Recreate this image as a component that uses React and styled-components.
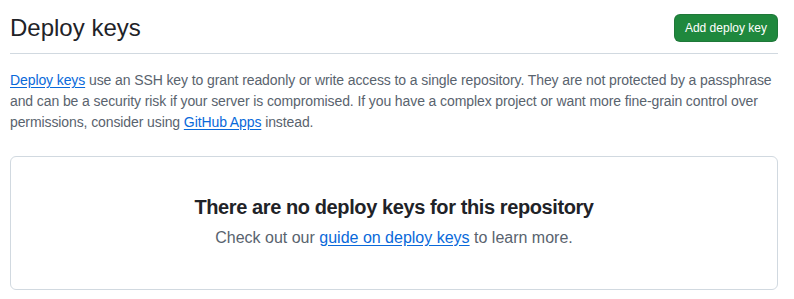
import React from 'react';
import styled, { createGlobalStyle } from 'styled-components';

const GlobalStyle = createGlobalStyle`
  body {
    margin: 0;
    background: #ffffff;
    font-family: "Liberation Sans", "Noto Sans", sans-serif;
    color: #1f2328;
  }
`;

const Page = styled.div`
  width: 768px;
  margin-left: 10px;
  padding-top: 12px;
`;

const Header = styled.div`
  display: flex;
  align-items: center;
  justify-content: space-between;
  padding-bottom: 9px;
  border-bottom: 1px solid #d1d9e0;
`;

const Title = styled.h2`
  margin: 0;
  font-size: 24px;
  font-weight: 400;
  line-height: 32px;
  color: #1f2328;
`;

const PrimaryButton = styled.button`
  height: 28px;
  padding: 0 10px;
  border: 1px solid rgba(31, 35, 40, 0.15);
  border-radius: 6px;
  background: #1f883d;
  color: #ffffff;
  font-family: inherit;
  font-size: 12px;
  font-weight: 500;
  cursor: pointer;
`;

const Description = styled.p`
  margin: 16px 0 0;
  font-size: 14px;
  line-height: 21px;
  letter-spacing: -0.1px;
  color: #59636e;
`;

const Link = styled.a`
  color: #0969da;
  text-decoration: underline;
  text-underline-offset: 2px;
`;

const Blankslate = styled.div`
  margin-top: 23px;
  border: 1px solid #d1d9e0;
  border-radius: 6px;
  padding: 35px 32px 39px;
  text-align: center;
`;

const BlankTitle = styled.h3`
  margin: 0;
  font-size: 20px;
  font-weight: 600;
  line-height: 30px;
  letter-spacing: -0.4px;
  color: #1f2328;
`;

const BlankText = styled.p`
  margin: 4px 0 0;
  font-size: 16px;
  line-height: 24px;
  color: #59636e;
`;

export default function App() {
  return (
    <>
      <GlobalStyle />
      <Page>
        <Header>
          <Title>Deploy keys</Title>
          <PrimaryButton>Add deploy key</PrimaryButton>
        </Header>
        <Description>
          <Link href="#">Deploy keys</Link> use an SSH key to grant readonly or write access to a single repository. They are not protected by a passphrase and can be a security risk if your server is compromised. If you have a complex project or want more fine-grain control over permissions, consider using <Link href="#">GitHub Apps</Link> instead.
        </Description>
        <Blankslate>
          <BlankTitle>There are no deploy keys for this repository</BlankTitle>
          <BlankText>
            Check out our <Link href="#">guide on deploy keys</Link> to learn more.
          </BlankText>
        </Blankslate>
      </Page>
    </>
  );
}
